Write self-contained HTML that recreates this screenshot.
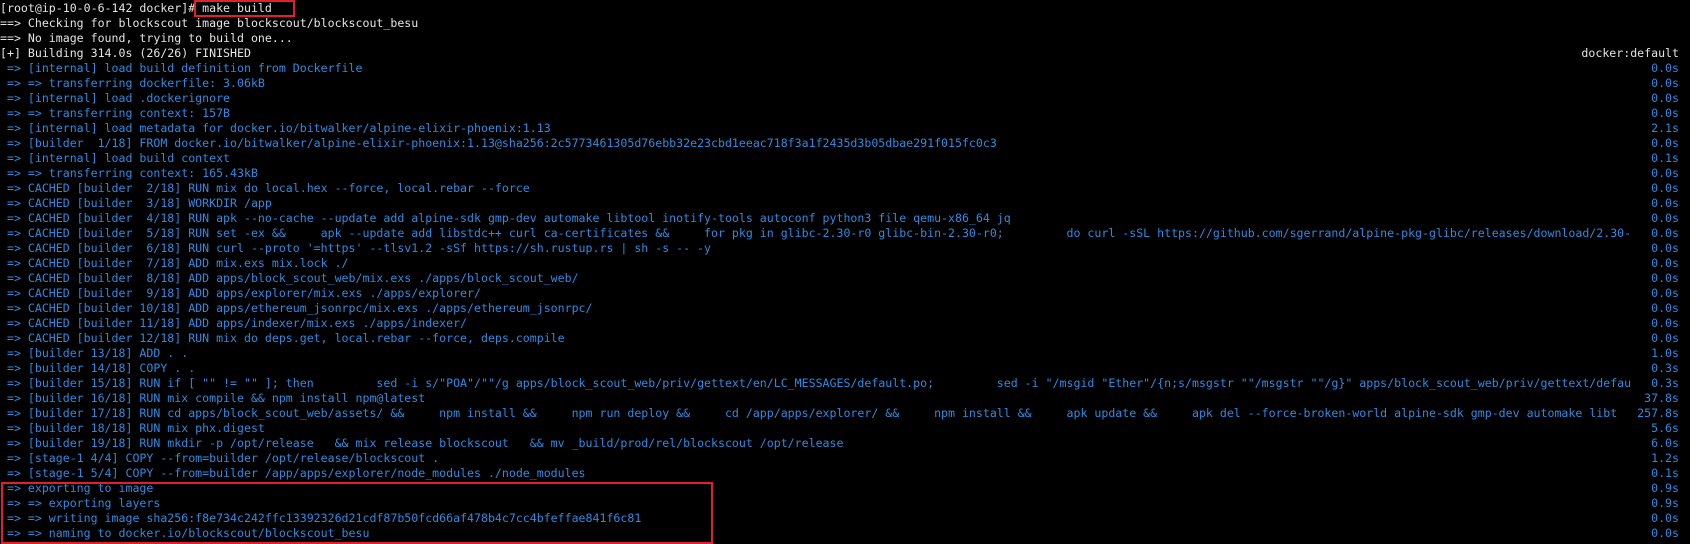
<!DOCTYPE html>
<html><head><meta charset="utf-8"><style>
html,body{margin:0;padding:0;background:#000;width:1690px;height:544px;overflow:hidden}
.t{position:absolute;left:0;top:0.5px;font-family:"DejaVu Sans Mono","Liberation Mono",monospace;font-size:11.58px;line-height:15px;}
.l{position:relative;height:15px;width:1690px;white-space:pre}
.l .a{position:absolute;left:0;top:0;width:1638px;overflow:hidden}
.l .r{position:absolute;right:11px;top:0}
.w{color:#e4e4e4}.b{color:#2d8be2}
.box{position:absolute;border:2px solid #e3202a;box-sizing:border-box}
</style></head><body>
<div class="t">
<div class="l w"><span class="a">[root@ip-10-0-6-142 docker]# make build</span></div>
<div class="l w"><span class="a">==&gt; Checking for blockscout image blockscout/blockscout_besu</span></div>
<div class="l w"><span class="a">==&gt; No image found, trying to build one...</span></div>
<div class="l w"><span class="a">[+] Building 314.0s (26/26) FINISHED</span><span class="r">docker:default</span></div>
<div class="l b"><span class="a"> =&gt; [internal] load build definition from Dockerfile</span><span class="r">0.0s</span></div>
<div class="l b"><span class="a"> =&gt; =&gt; transferring dockerfile: 3.06kB</span><span class="r">0.0s</span></div>
<div class="l b"><span class="a"> =&gt; [internal] load .dockerignore</span><span class="r">0.0s</span></div>
<div class="l b"><span class="a"> =&gt; =&gt; transferring context: 157B</span><span class="r">0.0s</span></div>
<div class="l b"><span class="a"> =&gt; [internal] load metadata for docker.io/bitwalker/alpine-elixir-phoenix:1.13</span><span class="r">2.1s</span></div>
<div class="l b"><span class="a"> =&gt; [builder  1/18] FROM docker.io/bitwalker/alpine-elixir-phoenix:1.13@sha256:2c5773461305d76ebb32e23cbd1eeac718f3a1f2435d3b05dbae291f015fc0c3</span><span class="r">0.0s</span></div>
<div class="l b"><span class="a"> =&gt; [internal] load build context</span><span class="r">0.1s</span></div>
<div class="l b"><span class="a"> =&gt; =&gt; transferring context: 165.43kB</span><span class="r">0.0s</span></div>
<div class="l b"><span class="a"> =&gt; CACHED [builder  2/18] RUN mix do local.hex --force, local.rebar --force</span><span class="r">0.0s</span></div>
<div class="l b"><span class="a"> =&gt; CACHED [builder  3/18] WORKDIR /app</span><span class="r">0.0s</span></div>
<div class="l b"><span class="a"> =&gt; CACHED [builder  4/18] RUN apk --no-cache --update add alpine-sdk gmp-dev automake libtool inotify-tools autoconf python3 file qemu-x86_64 jq</span><span class="r">0.0s</span></div>
<div class="l b"><span class="a"> =&gt; CACHED [builder  5/18] RUN set -ex &amp;&amp;     apk --update add libstdc++ curl ca-certificates &amp;&amp;     for pkg in glibc-2.30-r0 glibc-bin-2.30-r0;         do curl -sSL https://github.com/sgerrand/alpine-pkg-glibc/releases/download/2.30-</span><span class="r">0.0s</span></div>
<div class="l b"><span class="a"> =&gt; CACHED [builder  6/18] RUN curl --proto '=https' --tlsv1.2 -sSf https://sh.rustup.rs | sh -s -- -y</span><span class="r">0.0s</span></div>
<div class="l b"><span class="a"> =&gt; CACHED [builder  7/18] ADD mix.exs mix.lock ./</span><span class="r">0.0s</span></div>
<div class="l b"><span class="a"> =&gt; CACHED [builder  8/18] ADD apps/block_scout_web/mix.exs ./apps/block_scout_web/</span><span class="r">0.0s</span></div>
<div class="l b"><span class="a"> =&gt; CACHED [builder  9/18] ADD apps/explorer/mix.exs ./apps/explorer/</span><span class="r">0.0s</span></div>
<div class="l b"><span class="a"> =&gt; CACHED [builder 10/18] ADD apps/ethereum_jsonrpc/mix.exs ./apps/ethereum_jsonrpc/</span><span class="r">0.0s</span></div>
<div class="l b"><span class="a"> =&gt; CACHED [builder 11/18] ADD apps/indexer/mix.exs ./apps/indexer/</span><span class="r">0.0s</span></div>
<div class="l b"><span class="a"> =&gt; CACHED [builder 12/18] RUN mix do deps.get, local.rebar --force, deps.compile</span><span class="r">0.0s</span></div>
<div class="l b"><span class="a"> =&gt; [builder 13/18] ADD . .</span><span class="r">1.0s</span></div>
<div class="l b"><span class="a"> =&gt; [builder 14/18] COPY . .</span><span class="r">0.3s</span></div>
<div class="l b"><span class="a"> =&gt; [builder 15/18] RUN if [ "" != "" ]; then         sed -i s/"POA"/""/g apps/block_scout_web/priv/gettext/en/LC_MESSAGES/default.po;         sed -i "/msgid "Ether"/{n;s/msgstr ""/msgstr ""/g}" apps/block_scout_web/priv/gettext/defau</span><span class="r">0.3s</span></div>
<div class="l b"><span class="a"> =&gt; [builder 16/18] RUN mix compile &amp;&amp; npm install npm@latest</span><span class="r">37.8s</span></div>
<div class="l b"><span class="a"> =&gt; [builder 17/18] RUN cd apps/block_scout_web/assets/ &amp;&amp;     npm install &amp;&amp;     npm run deploy &amp;&amp;     cd /app/apps/explorer/ &amp;&amp;     npm install &amp;&amp;     apk update &amp;&amp;     apk del --force-broken-world alpine-sdk gmp-dev automake libt</span><span class="r">257.8s</span></div>
<div class="l b"><span class="a"> =&gt; [builder 18/18] RUN mix phx.digest</span><span class="r">5.6s</span></div>
<div class="l b"><span class="a"> =&gt; [builder 19/18] RUN mkdir -p /opt/release   &amp;&amp; mix release blockscout   &amp;&amp; mv _build/prod/rel/blockscout /opt/release</span><span class="r">6.0s</span></div>
<div class="l b"><span class="a"> =&gt; [stage-1 4/4] COPY --from=builder /opt/release/blockscout .</span><span class="r">1.2s</span></div>
<div class="l b"><span class="a"> =&gt; [stage-1 5/4] COPY --from=builder /app/apps/explorer/node_modules ./node_modules</span><span class="r">0.1s</span></div>
<div class="l b"><span class="a"> =&gt; exporting to image</span><span class="r">0.9s</span></div>
<div class="l b"><span class="a"> =&gt; =&gt; exporting layers</span><span class="r">0.9s</span></div>
<div class="l b"><span class="a"> =&gt; =&gt; writing image sha256:f8e734c242ffc13392326d21cdf87b50fcd66af478b4c7cc4bfeffae841f6c81</span><span class="r">0.0s</span></div>
<div class="l b"><span class="a"> =&gt; =&gt; naming to docker.io/blockscout/blockscout_besu</span><span class="r">0.0s</span></div>
</div>
<div class="box" style="left:194px;top:0px;width:101px;height:17px"></div>
<div class="box" style="left:1px;top:482px;width:712px;height:62px"></div>
</body></html>
